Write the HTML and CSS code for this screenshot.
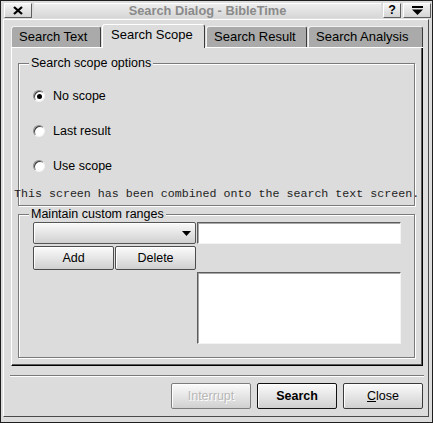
FILE: index.html
```html
<!DOCTYPE html>
<html>
<head>
<meta charset="utf-8">
<link rel="stylesheet" href="styles.css">
</head>
<body>
<div class="window">
  <div class="titlebar">
    <div class="tbtn close"><svg width="10" height="9" viewBox="0 0 10 9"><path d="M1 1 L9 8 M9 1 L1 8" stroke="#000" stroke-width="2.3"/></svg></div>
    <div class="title">Search Dialog - BibleTime</div>
    <div class="tbtn help">?</div>
    <div class="tbtn menu"><svg width="11" height="9" viewBox="0 0 11 9"><rect x="0" y="0" width="11" height="2" fill="#000"/><polygon points="0,3.5 11,3.5 5.5,9" fill="#000"/></svg></div>
  </div>
  <div class="client">
    <div class="tabbar">
      <div class="tab t1">Search Text</div>
      <div class="tab t2 active">Search Scope</div>
      <div class="tab t3">Search Result</div>
      <div class="tab t4">Search Analysis</div>
    </div>
    <div class="panel">
      <fieldset class="group scope">
        <legend>Search scope options</legend>
        <div class="radios">
          <div class="radio"><span class="dot checked"></span>No scope</div>
          <div class="radio"><span class="dot"></span>Last result</div>
          <div class="radio"><span class="dot"></span>Use scope</div>
        </div>
        <div class="note">This screen has been combined onto the search text screen.</div>
      </fieldset>
      <fieldset class="group ranges">
        <legend>Maintain custom ranges</legend>
        <div class="ranges-grid">
          <div class="combo"><svg width="9" height="5" viewBox="0 0 9 5"><polygon points="0,0 9,0 4.5,5" fill="#000"/></svg></div>
          <div class="field input"></div>
          <button class="btn add">Add</button>
          <button class="btn del">Delete</button>
          <div class="field listbox"></div>
        </div>
      </fieldset>
    </div>
    <div class="separator"></div>
    <div class="actions">
      <button class="pbtn disabled">Interrupt</button>
      <button class="pbtn default">Search</button>
      <button class="pbtn"><u>C</u>lose</button>
    </div>
  </div>
</div>
</body>
</html>
```
FILE: styles.css
```css
body {
  margin: 0;
  background: #dcdcdc;
  font-family: "Liberation Sans", Arial, sans-serif;
  font-size: 12.5px;
  color: #000;
}

.window {
  width: 433px;
  height: 423px;
  box-sizing: border-box;
  border: 1px solid #1e1e1e;
  padding: 0 3px 5px 2px;
  display: flex;
  flex-direction: column;
  background: #dcdcdc;
}

.titlebar {
  height: 18px;
  flex: none;
  display: flex;
  align-items: center;
  gap: 2px;
  padding-left: 1px;
  margin-right: -2px;
}

.tbtn {
  height: 15px;
  box-sizing: border-box;
  border: 1px solid;
  border-color: #fff #5e5e5e #5e5e5e #fff;
  background: linear-gradient(#f4f4f4, #d4d4d4);
  display: flex;
  align-items: center;
  justify-content: center;
  flex: none;
}

.close { width: 28px; }
.help { width: 18px; font-weight: bold; font-size: 12.5px; line-height: 13px; }
.menu { width: 28px; }

.title {
  flex: 1;
  height: 15px;
  box-sizing: border-box;
  border-top: 1px solid #fff;
  background: linear-gradient(#ededed, #d6d6d6);
  text-align: center;
  font-weight: bold;
  font-size: 12.8px;
  line-height: 14px;
  color: #8a8a8a;
}

.client {
  flex: 1;
  min-height: 0;
  border: 1px solid;
  border-color: #fff #4a4a4a #4a4a4a #fff;
  padding: 4px 5px 0 7px;
  display: flex;
  flex-direction: column;
}

.tabbar {
  flex: none;
  height: 24px;
  display: flex;
  align-items: flex-end;
  gap: 1px;
  background: linear-gradient(#fff, #fff) left bottom / 100% 1px no-repeat;
}

.tab {
  height: 21px;
  margin-bottom: 1px;
  box-sizing: border-box;
  padding: 0 0 0 7px;
  background: #a9aaa9;
  border: 1px solid;
  border-bottom: none;
  border-color: #f2f2f2 #3a3a3a transparent #f2f2f2;
  border-radius: 3px 3px 0 0;
  line-height: 20px;
  font-size: 13px;
  white-space: nowrap;
  flex: none;
}

.t1 { width: 90px; }
.t2 { width: 103px; }
.t3 { width: 101px; }
.t4 { width: 115px; }

.tab.active {
  height: 24px;
  margin-bottom: 0;
  padding-left: 8px;
  background: #dcdcdc;
  border-color: #fff #3a3a3a transparent #fff;
}

.panel {
  flex: none;
  height: 318px;
  box-sizing: border-box;
  border-left: 1px solid #fff;
  border-right: 1px solid #000;
  border-bottom: 1px solid #000;
  box-shadow: inset -1px -1px 0 #5a5a5a;
  padding: 8px 7px 7px 6px;
  display: flex;
  flex-direction: column;
}

.group {
  margin: 0;
  min-width: 0;
  border: 1px solid #7a7a7a;
  box-shadow: 1px 1px 0 #fff, inset 1px 1px 0 #fff;
}

.group legend {
  margin-left: -4px;
  padding: 0 2px;
  line-height: 14px;
  background: #dcdcdc;
}

.scope {
  padding: 16px 14px 4px 14px;
}

.radios {
  display: flex;
  flex-direction: column;
  gap: 15px;
}

.radio {
  height: 20px;
  line-height: 20px;
  display: flex;
  align-items: center;
  gap: 8px;
}

.dot {
  width: 12px;
  height: 12px;
  box-sizing: border-box;
  border-radius: 50%;
  border: 1px solid;
  border-color: #8c8c8c #f4f4f4 #f4f4f4 #8c8c8c;
  background: #fff;
  box-shadow: inset 1px 1px 0 #3c3c3c;
  display: flex;
  align-items: center;
  justify-content: center;
}

.dot.checked::after {
  content: "";
  width: 5px;
  height: 5px;
  border-radius: 50%;
  background: #000;
}

.note {
  margin-top: 11px;
  margin-left: -19px;
  line-height: 14px;
  font-family: "Liberation Mono", "Courier New", monospace;
  font-size: 11.65px;
  white-space: nowrap;
  color: #1e1e1e;
}

.ranges {
  flex: 1;
  margin-top: 1px;
  padding: 1px 13px 0 14px;
}

.ranges-grid {
  display: grid;
  grid-template-columns: 81px 81px 1fr;
  grid-template-rows: 22px 24px 72px;
  column-gap: 1px;
  row-gap: 2px;
}

.combo {
  grid-column: 1 / 3;
  box-sizing: border-box;
  border: 1px solid #555;
  border-radius: 2px;
  background: linear-gradient(#fafafa, #d0d0d0);
  box-shadow: inset 1px 1px 0 #fff;
  display: flex;
  align-items: center;
  justify-content: flex-end;
  padding-right: 4px;
}

.field {
  grid-column: 3;
  box-sizing: border-box;
  background: #fff;
  border: 1px solid;
  border-color: #5c5c5c #f4f4f4 #f4f4f4 #5c5c5c;
  box-shadow: inset 1px 1px 0 #a8a8a8;
}

.input { grid-row: 1; }
.listbox { grid-row: 3; }

.btn {
  font: inherit;
  color: #000;
  padding: 0;
  box-sizing: border-box;
  border: 1px solid #4c4c4c;
  border-radius: 2px;
  background: linear-gradient(#fbfbfb, #d0d0d0);
  box-shadow: inset 1px 1px 0 #fff;
}

.add { grid-column: 1; grid-row: 2; }
.del { grid-column: 2; grid-row: 2; }

.separator {
  flex: none;
  margin: 9px -1px 0;
  height: 0;
  border-top: 1px solid #7a7a7a;
  border-bottom: 1px solid #fff;
}

.actions {
  flex: none;
  margin-top: 6px;
  display: flex;
  justify-content: flex-end;
  gap: 6px;
}

.pbtn {
  width: 80px;
  height: 26px;
  font: inherit;
  color: #000;
  padding: 0;
  box-sizing: border-box;
  border: 1px solid #3a3a3a;
  border-radius: 2px;
  background: linear-gradient(#fbfbfb, #d0d0d0);
  box-shadow: inset 1px 1px 0 #fff;
}

.pbtn.default {
  font-weight: bold;
  border-color: #111;
}

.pbtn.disabled {
  color: #b8b8b8;
  text-shadow: 1px 1px 0 #fff;
  border-color: #7c7c7c;
}
```
